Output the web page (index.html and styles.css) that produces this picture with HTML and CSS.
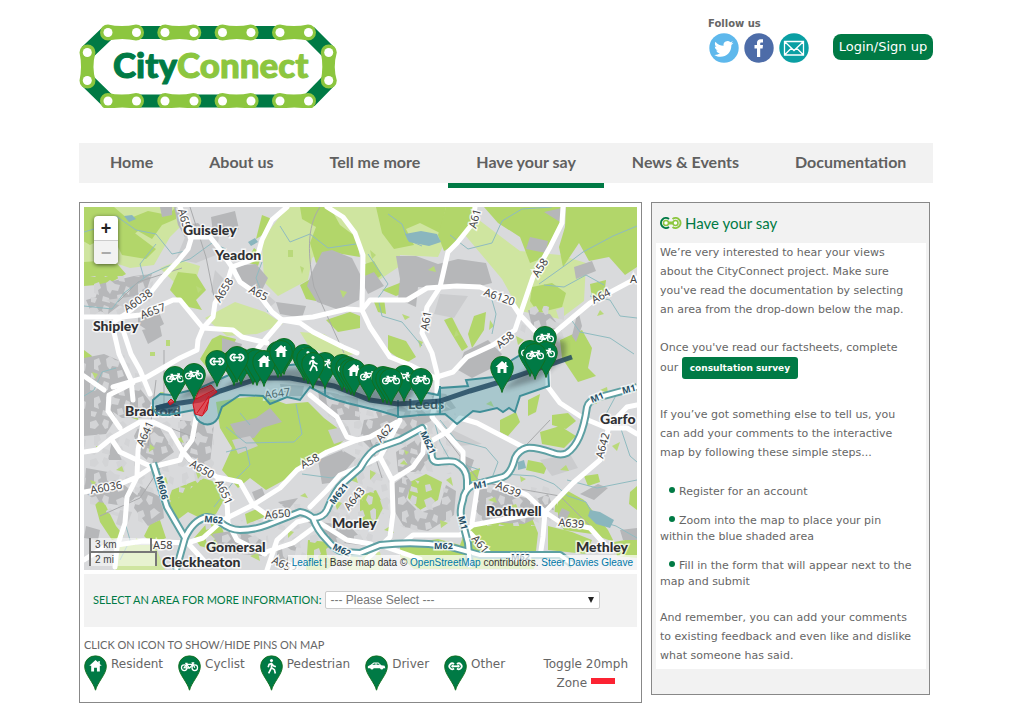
FILE: index.html
```html
<!DOCTYPE html>
<html lang="en">
<head>
    <meta charset="UTF-8">
    <meta name="viewport" content="width=device-width, initial-scale=1.0">
    <title>CityConnect - Have your say</title>
    <link rel="stylesheet" href="styles.css">
</head>
<body>
    <!-- shared icons -->
    <svg class="sprite" aria-hidden="true">
        <symbol id="pin" viewBox="0 0 24 37">
            <path d="M12 36.500C10 28 .7 20 .7 11.500a11.300 11 0 0 1 22.600 0C23.300 20 14 28 12 36.500z" fill="#007a45" stroke="#12701f"/>
        </symbol>
        <symbol id="house" viewBox="0 0 24 37">
            <use href="#pin"/>
            <path d="M12 5l-6.500 6h2v6h3v-4h3v4h3v-6h2l-2-2V6h-1.500v1.500z" fill="#fff"/>
        </symbol>
        <symbol id="bike" viewBox="0 0 24 37">
            <use href="#pin"/>
            <g fill="none" stroke="#fff" stroke-width="1.300">
                <circle cx="6.500" cy="13" r="2.900"/><circle cx="17.500" cy="13" r="2.900"/>
                <path d="M6.500 13L9 9.500h6.500L12 13.500zM9 9.500L12 13.500M7.500 8.500h2.500M17.500 13l-2.500-5h2"/>
            </g>
        </symbol>
        <symbol id="walker" viewBox="0 0 24 37">
            <use href="#pin"/>
            <circle cx="12" cy="5.500" r="1.600" fill="#fff"/>
            <path d="M12 8v5l-3 6M12 13l3 2 1 4M8.500 12.500L9.500 9.500 12 8.500l2 2.500 2.500 1" fill="none" stroke="#fff" stroke-width="1.700"/>
        </symbol>
        <symbol id="car" viewBox="0 0 24 37">
            <use href="#pin"/>
            <path d="M3 13.500v-2l3-1.500 3-2.500h5l3 2.800 3.500.7.700 2.500h-2a1.800 1.800 0 0 1-3.500 0H9a1.800 1.800 0 0 1-3.500 0z" fill="#fff"/>
            <path d="M7.500 10l2-1.500h1.500V10zM12 8.500h1.700l1.800 1.500H12z" fill="#007a45"/>
        </symbol>
        <symbol id="link" viewBox="0 0 24 37">
            <use href="#pin"/>
            <g fill="none" stroke="#fff" stroke-width="1.800">
                <path d="M10.500 9.200a3 3 0 1 0 0 4.600M13.500 9.200a3 3 0 1 1 0 4.600"/>
                <path d="M8.500 11.500h7"/>
            </g>
            <circle cx="9" cy="11.500" r="1.300" fill="#fff"/><circle cx="15" cy="11.500" r="1.300" fill="#fff"/>
        </symbol>
    </svg>

    <header class="header">
        <a href="#" class="logo" aria-label="CityConnect">
            <svg width="258" height="84" viewBox="79 24 258 84">
                <g stroke="#007a45" stroke-width="13">
                    <path d="M136 32.500h29M194 32.500h28M251 32.500h29M136 101h29M194 101h28M251 101h29"/>
                    <path d="M108 32.500L87 52.500M309 32.500L329 52.500M87 80.500L108 101M329 80.500L309 101" stroke-width="15"/>
                </g>
                <g fill="#8cc63f">
                    <g id="chainRow">
                        <path id="plate" d="M108 24.500a8 8 0 1 0 0 16q14.500-3 28 0a8 8 0 1 0 0-16q-14.500 3-28 0z"/>
                        <use href="#plate" x="57.300"/>
                        <use href="#plate" x="114.600"/>
                        <use href="#plate" x="172"/>
                    </g>
                    <use href="#chainRow" y="68.500"/>
                    <path id="sidePlate" d="M79.500 52.500a8 8 0 1 1 16 0q-4 14 0 28a8 8 0 1 1-16 0q3-14 0-28z"/>
                    <use href="#sidePlate" x="241.300"/>
                </g>
                <g fill="#fff">
                    <g id="rivets">
                        <circle cx="108" cy="32.500" r="4.500"/><circle cx="136.500" cy="32.500" r="4.500"/>
                        <circle cx="165" cy="32.500" r="4.500"/><circle cx="194" cy="32.500" r="4.500"/>
                        <circle cx="222.500" cy="32.500" r="4.500"/><circle cx="251" cy="32.500" r="4.500"/>
                        <circle cx="280" cy="32.500" r="4.500"/><circle cx="308.500" cy="32.500" r="4.500"/>
                    </g>
                    <use href="#rivets" y="68.500"/>
                    <circle cx="87.300" cy="52.500" r="4.500"/><circle cx="87.300" cy="80.500" r="4.500"/>
                    <circle cx="328.700" cy="52.500" r="4.500"/><circle cx="328.700" cy="80.500" r="4.500"/>
                </g>
                <text x="113" y="78" class="logo-text"><tspan class="dark">City</tspan><tspan class="light">Connect</tspan></text>
            </svg>
        </a>
        <div class="account">
            <div class="follow">
                <span class="follow-title">Follow us</span>
                <div class="social">
                    <a href="#" aria-label="Twitter">
                        <svg width="30" height="30" viewBox="0 0 30 30">
                            <circle cx="15" cy="15" r="14.700" fill="#5eb8ec"/>
                            <path d="M24.500 9.700c-.8.400-1.500.5-2.300.6.800-.5 1.400-1.200 1.700-2-.8.400-1.600.7-2.500.9a4 4 0 0 0-6.800 3.600c-3.300-.1-6.200-1.700-8.200-4.100-1 1.800-.5 4.100 1.200 5.300-.6 0-1.200-.2-1.800-.5 0 2 1.400 3.500 3.200 3.900-.6.200-1.200.2-1.800.1.500 1.600 2 2.700 3.700 2.700a8 8 0 0 1-5.700 1.700c7.700 4.600 17.300.2 17.200-9.900.8-.6 1.500-1.300 2.100-2.300z" fill="#fff"/>
                        </svg>
                    </a>
                    <a href="#" aria-label="Facebook">
                        <svg width="30" height="30" viewBox="0 0 30 30">
                            <circle cx="15" cy="15" r="14.700" fill="#4d6ca8"/>
                            <path d="M13 24v-8.500h-2.500V12H13V9.800C13 7.500 14.500 6.300 16.600 6.300h2.400v3.200h-1.500c-1 0-1.300.5-1.300 1.300V12H19l-.4 3.500h-2.400V24z" fill="#fff"/>
                        </svg>
                    </a>
                    <a href="#" aria-label="Email">
                        <svg width="30" height="30" viewBox="0 0 30 30">
                            <circle cx="15" cy="15" r="14.700" fill="#0a9fa3"/>
                            <path d="M5.500 8.500h19v13.500h-19zM5.500 8.500L15 17.500l9.500-9M5.500 22l7-7M24.500 22l-7-7" fill="none" stroke="#fff" stroke-width="1.300"/>
                        </svg>
                    </a>
                </div>
            </div>
            <a href="#" class="login">Login/Sign up</a>
        </div>
    </header>

    <nav class="nav">
        <a href="#">Home</a>
        <a href="#">About us</a>
        <a href="#">Tell me more</a>
        <a href="#" class="active">Have your say</a>
        <a href="#">News &amp; Events</a>
        <a href="#">Documentation</a>
    </nav>

    <main class="content">
        <section class="map-panel">
            <div class="map">
                <svg class="map-canvas" viewBox="84 207 553 363">
                    <defs>
                        <filter id="blur"><feGaussianBlur stdDeviation="2.500"/></filter>
                        <pattern id="blocks" width="44" height="38" patternUnits="userSpaceOnUse">
                            <path d="M2 4l6-2 3 5-4 4-5-1zM16 1l5 2-1 7-3 1-3-5zM28 6l7-3 4 4-3 4 1 5-6-1zM6 18l5-2 2 6-3 2 1 5-5-2zM18 17l4-3 5 4 5 1-2 6-6-1-2 4-3-4zM38 20l4 2-1 7-5-3zM3 31l6 1-2 5-4-1zM15 30l6 2 1 5-8-2zM29 29l5-1 2 6-6 2z" fill="#d3d4d6"/>
                        </pattern>
                    </defs>
                    <rect x="84" y="207" width="553" height="363" fill="#d9dadc"/>

                    <!-- farmland -->
                    <g fill="#cfe5a0">
                        <path d="M84 207h91l5 20-10 10-16 28-24 3-18-6-28 12z"/>
                        <path d="M262 240l25-33h188l-27 28-10 22-38-2v11l-24 16-16-30-30-8-18 14-4 22-30 16-14-14z"/>
                        <path d="M465 235l10-18 45 34 40 4 26 8-2 38-24 18-40-8-18-32z"/>
                        <path d="M160 268l20-8 20 6-4 14-22 2zM205 318l30-16 30 10 18 12-26 10-30 2zM300 332l24 2 30 20-14 4-30-10z"/>
                        <path d="M120 545h35l10 25h-50zM350 552h30l4 18h-38z"/>
                    </g>
                    <!-- woods and parks -->
                    <g fill="#b2d66a">
                        <path d="M84 207h30l14 12 20-8 20 4 8-8v12l-14 6-10 14-14-8-12 10-16-6-20 10-10-6zM84 262l30-2 12 14-18 10-24 2zM112 235l20-4 24 18-10 10-24-4z"/>
                        <path d="M300 207h30l10 18 16 12 4 20-24-4-20 10-6-20 6-16-14-8zM262 215l10 4-6 14-10 6zM376 207h70l-6 26-20-10-14 6 8 16-20 4-12-16z"/>
                        <path d="M446 207h28l-2 18-14 18-14 8-6-16zM484 207h79l-3 20-14 30-16 6-10-26-22-14zM566 207h71v60l-12 8-16-18-20 4-10-18-16 24-4-20 6-20z"/>
                        <path d="M532 287l20-4 14 10-4 14-24 6-8-12zM590 284l16-4-2 16-12 4zM560 340l22-10 10 18-4 20 8 8-18 6-16-24z"/>
                        <path d="M178 272l18 2 10 16-10 10 6 10-18-4-14-16zM246 262l8-14 8 6-4 12zM300 285l14-8 12 10-10 14-10-2zM326 320l24-8 10 4v12l-22 4zM220 335l16 4-6 16-22 14-8-10 12-20z"/>
                        <path d="M84 350l8 6-4 14-4-4zM122 408l8-8 10 4-2 16-12-4zM84 416l12-2 2 10-14 4zM94 500l10 2 12 24 8 10-12 4-12-18z"/>
                        <path d="M362 265l12-4 8 14-14 10zM382 290l20-8 14 6-20 8zM374 302l10-4 2 16-8-2zM388 335l18 6 10 16-10 6-18-12zM444 320l8-3 8 16 8 14-6 4-12-20zM474 316l12-4-2 18-12 18-4-14z"/>
                        <path d="M216 402l22-4 26-2 22 8 22-2 16 16 24 18-14 14-26 10-20 18-22 12-16-12-12 10-16-18 10-22-12-20z"/>
                        <path d="M172 490l30-12 14 4 8 18-8 14-16 4-12-6-16 12-6-18zM208 522l14 6 6 16-14 6-14-4-6-8zM150 524l10-4 6 18-14 6-8-8zM245 514l14-6 8 8-20 8z"/>
                        <path d="M500 420l16-8 4 10-12 14-8-4zM528 400l12-6-4 18-8 4zM552 415l16-2 8 8-10 8-14-4zM540 432l20-6 16 10-12 12-22-4zM528 460l20 4-4 10-18-4zM470 472l10-4-4 16-8-4z"/>
                        <path d="M410 482l16-8 16 8-4 18-18 10-12-12zM360 496l16-6 8 16-10 20-14-4zM400 545l38-6 22 6 6-16 30-10 34-6 8 20-4 36h-120l-14-12zM556 498l10-8 18 10 24 30 6 12-22-8-28-4-10-14zM584 476l14-2 2 8-12 4zM308 540l20 2 10 20-12 8h-20zM548 526l24 6 20 8-6 14-38-4zM614 542l23-4v20l-20-2zM630 492l7-6v24l-8-6z"/>
                    </g>
                    <!-- built up areas -->
                    <g fill="#b6b7b9">
                        <path d="M174 207l8 2 4 16 12-2 14 14-8 10-18-8-8-14zM211 217l24-6 4 18-10 8-16-4zM160 207l12 0 0 8-10 2zM236 266l20-2 12 14-6 12-18-6-6-8zM322 252l10-2 20 8 9 18-2 24-20 10-22-8-10-16 4-12zM276 302l30 4-4 12-22-4zM100 284l34-8 18-2-6 18-22 10-16 12-16-6zM138 312l20-2 6 14-14 8-12-8zM142 330l18-4 2 10-14 8zM86 300l14-4 10 12-18 6z"/>
                        <path d="M396 256l20 0 22 8 20-5 28 4 6 20-16 4-30 2-28-2-2 20-18-8 2-20zM360 278l14-6 10 14-16 8zM530 237l18 4-2 12-20-4zM574 267l18-6 4 10-20 8zM528 310l22 4 12 16-14 10-16-14zM464 352l24-12 14 14-10 14-20 10-14-8zM544 212l18-4-2 14zM578 310l4 16-6 16-4-6z"/>
                        <path d="M84 358l20-4 14 6 20 26 14 18-10 14-20 0-20-14-18 4zM84 398l24 4 8 16-10 16-22 2zM140 424l20 4 14 24-20 14-14-12-6-18zM180 420l34 4-4 40-14 6-16-16zM86 468l22 4 30 24-14 10-26-4-14-10zM112 440l10 20-14 0zM140 486l22 12 2 20-16 8-14-18zM118 384l14-6 6 12-14 6z"/>
                        <path d="M230 424l26-6 14-10 12 14-20 6-8 10-16 0zM222 338l20 6-4 12-16-4zM280 384l24 2-2 10-20 0zM318 390l40 8 2 22-24 0-16-14zM364 420l26-4 4 16-24 16-10-10zM318 460l24-10 14 8-20 24-14 2zM278 502l20-4-10 12zM300 516l20 6 30 4 18 20-34-4-18-14zM278 546l20-4-6 20-16 0zM212 534l26-4 28 12-4 14-40-4zM252 492l10-4 4 10-10 4zM86 526l14 4-2 10-14-2z"/>
                        <path d="M376 412l38-8 18 14-8 20-20-2-22-8zM396 452l26-16 8 20-10 16-22 0zM392 485l14-10 6 8-6 16 14 14 20-8 6-20 10 6-2 24-26 16-24-4-12-20zM476 488l18 2 40 10 14-6 6 16-30 14-40-2-10-14zM430 392l16 2 10 14-18 6zM460 454l14 6-4 12-12-4zM580 494l18-10 10 4-14 12zM562 508l8 4-6 12-8-4zM620 530l17-2v12h-14z"/>
                    </g>
                    <path d="M84 355h50l30 60h50v55l-70 55-60-20zM200 520h66l4 34h-60zM276 504h100v60H276zM318 390h114l24 24-4 60h-60l60 16v30l-30 20-60-40zM474 486h84v40h-84zM90 276h64l-6 40-60 2zM520 306h44v34h-44z" fill="url(#blocks)"/>
                    <!-- paler housing blocks -->
                    <g fill="#cbccce">
                        <path d="M190 225l30 6-4 24-20 8-20-4zM215 270l10 10-6 18-8-6zM106 300l30-4-10 12zM262 290l14 12-10 8zM440 294l28 2-14 22-20-4zM170 376l30-8-6 18zM232 440l18-4 8 10-20 8zM440 424l42 20-24 2-12-10zM540 460l30-6 8 14-26 8zM328 430l20-4 4 12-18 6zM120 510l12 2-6 16-10-4z"/>
                    </g>
                    <!-- small green patches -->
                    <path d="M150 352h5v4h-5zM166 340h4v6h-4zM92 372l6 2-3 5zM160 392h4v3h-4zM196 286l6 3-4 4zM300 266l4 2-2 6zM288 250h5v7h-5zM340 290l7 2-4 6zM370 250l6 5-4 4zM402 314l8 3-5 3zM418 340l5 2-3 6zM428 270l6-4 2 6zM456 330l3 5-5 2zM490 320l4 6-5 4zM516 336l8 4-6 5zM600 310l4 4-7 2zM96 446h6v3h-6zM116 470l6-4 2 6zM150 444l5 4-6 4zM176 440l5-3 3 6zM196 472l6 2-4 5zM90 480l6 2-3 4zM160 480l6-3 2 7zM300 496l5-3 3 5zM334 500l8 3-5 7zM350 480l6-4 2 7zM370 470l6 3-6 7zM400 464l4-4 4 5zM446 480l5-3 2 9zM440 520l8 3-7 5zM486 404l5-3 3 6zM520 476l6 3-5 3zM560 470l6-5 3 6zM612 446l8-4-3 9zM600 390l7-3 1 6zM384 530l6-4 4 7zM288 530l6 2-6 6zM250 556l8-3 2 8zM136 538l5 3-6 4zM488 500l7-3 2 6zM510 506l6-2 2 5zM404 450l5 2-3 3zM590 402l5-3 2 5z" fill="#b9d97a"/>

                    <!-- rivers, canals and lakes -->
                    <g fill="none" stroke="#8fbbc0" stroke-width="1" stroke-linejoin="round">
                        <path d="M84 232l20-6 12-10 20 14 20 4 16 20 18-4M84 306l28 3 12-16 24-18 18-8 24-8 22-16 14 6M156 244l-16 20 4 14M280 226l10 16 20-8 18 14 28-4M262 262l-6 16 8 20 4 14M388 214l14 10 6 16 14 6M422 346l-20-24-20-6-4-18 10-14-20-30M450 235l18 14 24-6 10-22 20-12 30-2M544 285l20 2 22-12 18 10M637 226l-24 10-30 16-16 12-28 20M570 318l10 14 30 6 24 16M590 296l20 4 10 16 17 2M492 300l4 14-4 20M84 396l10-6 8-18 14-4"/>
                        <path d="M226 427l20 16 48-1 8-8-6-30M226 452l20-5 4 18-16 16-20 26M250 425l-10-12M302 474l30 4 20-8M480 470l-30-10-10-18-6-22M440 420l16 20 30 8 12 14-6 16M504 474l30 2 20 8 14 12 18 6 10 18 20 6 21 12M637 480l-40 8-30-8M620 388l-14 26 14 12 10 30 7 6M120 560l10-20-4-14M210 560l16 10"/>
                    </g>
                    <path d="M405 234l16-3 16 3 4 8-12 4-20-4zM248 242l7-4 3 4-7 4zM124 216l8-1 4 4-7 3zM518 462l6-2 2 8-8 2zM590 510l10 2 14 8-4 8-14-4-8-8z" fill="#8ab6be"/>
                    <path d="M320 207c-14 20-12 50-6 80l30 66M190 207l16 50 8 40M118 302l20-20 44-14M156 380l-8 66M160 424l36 14M440 430l40 52 80 14 40 40M100 516l40-18 20-30M164 350v60M370 440l12 38M550 420l-40 42" fill="none" stroke="#a9aaac" stroke-width="1"/>

                    <!-- A roads -->
                    <g class="roads-a">
                        <path d="M180 207l8 20 3 12-3 10-10 12-15 16-16 20-20 16-12 8"/>
                        <path d="M190 237l20 0 8 10 14 20 8 15 20 14 12 16 10 8 18 3 13 9 30 15 14 6"/>
                        <path d="M232 267l25-9 5-18 10-20 15-13M327 207l16 10 12 16 8 22-1 55 8 17 20 30 20 8 27 14"/>
                        <path d="M232 267l-5 16-12 20-2 14-10 11-5 12-1 10-17 8-33 19-34 10"/>
                        <path d="M84 317h38l18-2 33-15h7l23 28 30 2 9 7 25 6M282 320l-24 28"/>
                        <path d="M282 320l31-3 34-8 15 1 8-10h37l20-12 30-2 23 1 30 13 10 15 17 18 11 25v29"/>
                        <path d="M475 207l-2 16-16 20-9 9-8 35-13 20-5 26 10 20 5 20v22"/>
                        <path d="M563 207l-1 16-12 24-17 30-13 38-5 15-22 15-26 12-14 15-16 5"/>
                        <path d="M553 334l37-31 47-25"/>
                        <path d="M113 328l6 26 12 26 2 20M123 330l8 24 9 16 10 24"/>
                        <path d="M84 452l13-2 15-12 28-16h13l17 8 13 22-3 8-28 7-32-15-8-12M133 383l-24 12-1 16 12 17"/>
                        <path d="M143 423l-5 27-1 27-10 20-2 26-8 24-2 20M84 492l29-5 24-10 15-10"/>
                        <path d="M183 452l7 8 27 17 23 5 13 23 14 10M197 413l-5 27-9 12M218 480l9 20 1 23 9 17 28 14"/>
                        <path d="M117 545l26-4 44 2 16-5 20-18 30-15 27-17 17-18 30-18 30-12 13-3 27-15"/>
                        <path d="M310 395l27 22 10 20 10 3M310 507l17-17 13-15 17-7 23-11M313 518l-16 4-20 18-10 30M263 553l30-10 27-20 27 17 24 4"/>
                        <path d="M84 560l20-13M185 540l20 22M400 420l-20 37 12 23 1 33-3 24-23 22M392 480l21-13 10-14 2-26M437 395l-5 22 11 13 20 22v16M428 443l22-13 10-12 17 5 46 24"/>
                        <path d="M403 543l10-8h47l13-10 27-5 45-8M477 490l-5 33M493 480l34 15 18 17 15 10 30 6 17 19M608 430l-8 30-27 23-28 29-2 25-3 20M548 387l12 16 23 15 24 10 20-21 10-2M607 428l20 0 10 6M470 533l23 24M84 376l20 14M380 545l40 14"/>
                    </g>
                    <!-- motorways -->
                    <g fill="none" stroke-linejoin="round">
                        <g stroke="#5ea0a3" stroke-width="8">
                            <path d="M153 463l14 44 18 31-9 32"/>
                            <path d="M185 538q8-18 22-21 8 1 13 5 10 8 20 8 14 0 27-5l33-13q7 1 13 6 4 12 14 22 8 10 16 12l17 1 20-8q34-4 67 1l33 9h80l13 10"/>
                            <path d="M313 518q10 0 14-8 8-20 16-27l17-15q10-18 20-21l20-7 22-12 10 22q-2 12 6 12 16-2 19 1 10 6 10 17v10"/>
                            <path d="M637 387l-37 10q-12 4-13 10-5 36-20 46-6 3-14 0-18-6-26-5-8 2-12 10-4 16-12 19l-30 8q-9 5-10 15-4 12-1 20l6 23 2 24"/>
                        </g>
                        <g stroke="#fff" stroke-width="4">
                            <path d="M153 463l14 44 18 31-9 32"/>
                            <path d="M185 538q8-18 22-21 8 1 13 5 10 8 20 8 14 0 27-5l33-13q7 1 13 6 4 12 14 22 8 10 16 12l17 1 20-8q34-4 67 1l33 9h80l13 10"/>
                            <path d="M313 518q10 0 14-8 8-20 16-27l17-15q10-18 20-21l20-7 22-12 10 22q-2 12 6 12 16-2 19 1 10 6 10 17v10"/>
                            <path d="M637 387l-37 10q-12 4-13 10-5 36-20 46-6 3-14 0-18-6-26-5-8 2-12 10-4 16-12 19l-30 8q-9 5-10 15-4 12-1 20l6 23 2 24"/>
                        </g>
                    </g>

                    <!-- road numbers -->
                    <g class="road-label">
                        <text transform="translate(178 210) rotate(75)">A65</text>
                        <text transform="translate(127 313) rotate(-35)">A6038</text>
                        <text transform="translate(142 319) rotate(-20)">A657</text>
                        <text transform="translate(220 303) rotate(-58)">A658</text>
                        <text transform="translate(248 292) rotate(28)">A65</text>
                        <text transform="translate(476 229) rotate(-75)">A61</text>
                        <text transform="translate(483 295) rotate(20)">A6120</text>
                        <text transform="translate(428 331) rotate(-80)">A61</text>
                        <text transform="translate(500 349) rotate(-40)">A58</text>
                        <text transform="translate(538 278) rotate(-57)">A58</text>
                        <text transform="translate(594 304) rotate(-28)">A64</text>
                        <text x="630" y="283">A</text>
                        <text transform="translate(143 447) rotate(-65)">A641</text>
                        <text transform="translate(91 494) rotate(-10)">A6036</text>
                        <text transform="translate(189 466) rotate(30)">A650</text>
                        <text transform="translate(215 482) rotate(65)">A651</text>
                        <text transform="translate(303 469) rotate(-28)">A58</text>
                        <text transform="translate(265 519) rotate(-5)">A650</text>
                        <text transform="translate(349 511) rotate(-50)">A643</text>
                        <text transform="translate(381 443) rotate(-50)">A62</text>
                        <text x="153" y="549">A58</text>
                        <text transform="translate(271 563) rotate(25)">A652</text>
                        <text transform="translate(495 488) rotate(22)">A639</text>
                        <text transform="translate(558 526) rotate(5)">A639</text>
                        <text transform="translate(603 459) rotate(-75)">A642</text>
                        <text transform="translate(471 539) rotate(50)">A61</text>
                        <text transform="translate(265 399) rotate(-8)">A647</text>
                    </g>
                    <g class="road-label motorway">
                        <text transform="translate(156 477) rotate(75)">M606</text>
                        <text transform="translate(204 522) rotate(5)">M62</text>
                        <text transform="translate(334 505) rotate(-52)">M621</text>
                        <text transform="translate(332 549) rotate(25)">M62</text>
                        <text x="434" y="549">M62</text>
                        <text x="511" y="560">M62</text>
                        <text transform="translate(420 433) rotate(65)">M621</text>
                        <text transform="translate(474 489) rotate(-10)">M1</text>
                        <text transform="translate(458 517) rotate(75)">M1</text>
                        <text transform="translate(592 403) rotate(-22)">M1</text>
                        <text transform="translate(623 394) rotate(-15)">M1</text>
                    </g>
                    <g class="place">
                        <text x="183" y="235">Guiseley</text>
                        <text x="215" y="260">Yeadon</text>
                        <text x="93" y="331">Shipley</text>
                        <text x="125" y="416">Bradford</text>
                        <text x="408" y="409">Leeds</text>
                        <text x="600" y="424">Garfo</text>
                        <text x="486" y="516">Rothwell</text>
                        <text x="576" y="552">Methley</text>
                        <text x="332" y="528">Morley</text>
                        <text x="206" y="552">Gomersal</text>
                        <text x="162" y="567">Cleckheaton</text>
                    </g>

                    <!-- consultation area and route -->
                    <path d="M153 400L160 394 171 395 200 388 240 370 300 364 354 370 414 390 438 395 440 388 468 386 466 380 494 377 512 360 522 354 547 350 549 386 520 396 515 412 509 408 503 412 497 408 480 412 473 411 457 424 445 414 420 415 400 417 380 411 347 403 330 398 310 387 300 400 287 397 270 404 263 396 240 395 222 407 218 418Q213 426 204 424 195 421 194 410L168 415Q154 416 153 408z" fill="#5fa9b6" fill-opacity=".4" stroke="#408f98" stroke-width="2"/>
                    <path d="M398 400v18M440 386v28M325 370v26" fill="none" stroke="#408f98" stroke-width="2"/>
                    <path d="M156 408l18-4 26-4 20-9 40-13 30 0 44 8 36 14 28 4 42-3 30-10 30-9 72-25" fill="none" stroke="#234a62" stroke-width="5" stroke-opacity=".85"/>
                    <path d="M155 406l14-4 10 4-6 7-15-1z" fill="#234a62" opacity=".75"/>
                    <g fill="#f0222e" fill-opacity=".72" stroke="#d3121d" stroke-width="1">
                        <path d="M193 404l6-14 12-5 6 7-8 6-2 12-5 6-7-2zM196 399l18-9M197 413l12-17M203 414l5-12M168 402l3-3 3 3-4 3z"/>
                    </g>

                    <!-- pin shadows -->
                    <g fill="#20262b" opacity=".35" filter="url(#blur)">
                        <path d="M176 400l30-24 16 0-10 18 40-24 50-2 20 8 60 12 34 0-10 20-40-6-30-12-60-10-50 8z"/>
                        <path d="M502 390l24-20 8-4 18-28 14 4 0 14-28 24-14 4z"/>
                    </g>
                    <!-- pins -->
                    <g>
                        <use href="#bike" x="163" y="366" width="24" height="37"/>
                        <use href="#bike" x="182" y="363" width="24" height="37"/>
                        <use href="#pin" x="222" y="349" width="24" height="37"/>
                        <use href="#pin" x="229" y="348" width="24" height="37"/>
                        <use href="#link" x="205" y="350" width="24" height="37"/>
                        <use href="#pin" x="241" y="348" width="24" height="37"/>
                        <use href="#pin" x="245" y="349" width="24" height="37"/>
                        <use href="#link" x="225" y="346" width="24" height="37"/>
                        <use href="#pin" x="266" y="341" width="24" height="37"/>
                        <use href="#pin" x="272" y="338" width="24" height="37"/>
                        <use href="#house" x="252" y="350" width="24" height="37"/>
                        <use href="#house" x="269" y="340" width="24" height="37"/>
                        <use href="#walker" x="292" y="344" width="24" height="37"/>
                        <use href="#walker" x="296" y="347" width="24" height="37"/>
                        <use href="#bike" x="313" y="352" width="24" height="37"/>
                        <use href="#walker" x="301" y="352" width="24" height="37"/>
                        <use href="#pin" x="330" y="354" width="24" height="37"/>
                        <use href="#bike" x="335" y="356" width="24" height="37"/>
                        <use href="#pin" x="339" y="358" width="24" height="37"/>
                        <use href="#house" x="342" y="359" width="24" height="37"/>
                        <use href="#bike" x="357" y="364" width="24" height="37"/>
                        <use href="#pin" x="371" y="366" width="24" height="37"/>
                        <use href="#pin" x="375" y="367" width="24" height="37"/>
                        <use href="#bike" x="392" y="365" width="24" height="37"/>
                        <use href="#bike" x="379" y="368" width="24" height="37"/>
                        <use href="#bike" x="409" y="368" width="24" height="37"/>
                        <use href="#house" x="490" y="356" width="24" height="37"/>
                        <use href="#bike" x="533" y="326" width="24" height="37"/>
                        <use href="#bike" x="518" y="340" width="24" height="37"/>
                        <use href="#bike" x="534" y="341" width="24" height="37"/>
                        <use href="#bike" x="523" y="343" width="24" height="37"/>
                    </g>
                </svg>
                <div class="zoom">
                    <button type="button" aria-label="Zoom in">+</button>
                    <button type="button" aria-label="Zoom out" disabled>&minus;</button>
                </div>
                <div class="scale">
                    <div class="scale-km">3 km</div>
                    <div class="scale-mi">2 mi</div>
                </div>
                <div class="attribution"><a href="#">Leaflet</a> | Base map data © <a href="#">OpenStreetMap</a> contributors. <a href="#">Steer Davies Gleave</a></div>
            </div>

            <form class="area-form">
                <label for="area">SELECT AN AREA FOR MORE INFORMATION:</label>
                <div class="select-wrap">
                    <select id="area" name="area">
                        <option>--- Please Select ---</option>
                    </select>
                </div>
            </form>

            <h2 class="legend-title">CLICK ON ICON TO SHOW/HIDE PINS ON MAP</h2>
            <div class="legend">
                <button type="button"><svg width="23" height="36"><use href="#house"/></svg>Resident</button>
                <button type="button"><svg width="23" height="36"><use href="#bike"/></svg>Cyclist</button>
                <button type="button"><svg width="23" height="36"><use href="#walker"/></svg>Pedestrian</button>
                <button type="button"><svg width="23" height="36"><use href="#car"/></svg>Driver</button>
                <button type="button"><svg width="23" height="36"><use href="#link"/></svg>Other</button>
                <button type="button" class="toggle"><span>Toggle 20mph</span><span>Zone <i class="zone-key"></i></span></button>
            </div>
        </section>

        <aside class="say">
            <h1>
                <svg width="22" height="14" viewBox="0 0 22 14">
                    <path d="M15 7H7" stroke="#8cc63f" stroke-width="3"/>
                    <circle cx="6" cy="7" r="2.500" fill="#fff" stroke="#8cc63f" stroke-width="1.500"/>
                    <circle cx="15.500" cy="7" r="2.500" fill="#fff" stroke="#8cc63f" stroke-width="1.500"/>
                    <path d="M9 3A5 5 0 1 0 9 11" fill="none" stroke="#007a45" stroke-width="2"/>
                    <path d="M12.500 3a5 5 0 1 1 0 8" fill="none" stroke="#8cc63f" stroke-width="2"/>
                </svg>
                Have your say
            </h1>
            <div class="say-body">
                <p>We’re very interested to hear your views about the CityConnect project. Make sure you've read the documentation by selecting an area from the drop-down below the map.</p>
                <p class="survey-line">Once you've read our factsheets, complete our <a href="#" class="survey">consultation survey</a></p>
                <p>If you’ve got something else to tell us, you can add your comments to the interactive map by following these simple steps...</p>
                <ul>
                    <li>Register for an account</li>
                    <li>Zoom into the map to place your pin within the blue shaded area</li>
                    <li>Fill in the form that will appear next to the map and submit</li>
                </ul>
                <p>And remember, you can add your comments to existing feedback and even like and dislike what someone has said.</p>
            </div>
        </aside>
    </main>
</body>
</html>
```

FILE: styles.css
```css
* {
    box-sizing: border-box;
}
body {
    margin: 0;
    padding: 0 91px 0 79px;
    font-family: "DejaVu Sans", Verdana, sans-serif;
    font-size: 12px;
    color: #666;
    background: #fff;
}
button {
    font: inherit;
    color: inherit;
    border: 0;
    padding: 0;
    background: none;
    cursor: pointer;
}
svg {
    display: block;
}
.sprite {
    position: absolute;
    width: 0;
    height: 0;
}

/* header */
.header {
    display: flex;
    justify-content: space-between;
    align-items: flex-start;
    height: 143px;
    padding-top: 17px;
}
.logo {
    padding-top: 7px;
}
.logo-text {
    font-family: Lato, sans-serif;
    font-size: 35px;
    font-weight: 900;
    stroke-width: 1;
    stroke-linejoin: round;
}
.dark {
    fill: #007a45;
    stroke: #007a45;
}
.light {
    fill: #8cc63f;
    stroke: #8cc63f;
}
.account {
    display: flex;
    align-items: flex-start;
    gap: 24px;
}
.follow-title {
    display: block;
    font-size: 10px;
    font-weight: bold;
    line-height: 14px;
    margin-bottom: 2px;
}
.social {
    display: flex;
    gap: 5px;
    padding-left: 1px;
}
.login {
    margin-top: 17px;
    width: 100px;
    line-height: 26px;
    border-radius: 8px;
    background: #007a45;
    color: #fff;
    font-size: 13px;
    text-align: center;
    text-decoration: none;
    white-space: nowrap;
}

/* navigation */
.nav {
    display: flex;
    justify-content: space-between;
    height: 40px;
    padding-left: 3px;
    background: #f2f2f2;
}
.nav a {
    height: 45px;
    padding: 0 28px;
    line-height: 38px;
    font-family: Lato, sans-serif;
    font-size: 16px;
    font-weight: bold;
    color: #606060;
    text-decoration: none;
    white-space: nowrap;
}
.nav .active {
    border-bottom: 5px solid #007a45;
}

.content {
    display: grid;
    grid-template-columns: 563fr 279fr;
    gap: 9px;
    align-items: start;
    padding: 19px 3px 0 0;
}

/* map */
.map-panel {
    border: 1px solid #888;
    padding: 4px 4px 9px;
}
.map {
    position: relative;
    overflow: hidden;
    font-family: "Liberation Sans", Arial, sans-serif;
}
.map-canvas {
    width: 100%;
}
.roads-a {
    fill: none;
    stroke: #fff;
    stroke-width: 5;
    stroke-linejoin: round;
    stroke-linecap: round;
}
.road-label {
    font-family: "Noto Sans", sans-serif;
    font-size: 11px;
    fill: #444;
    stroke: #fff;
    stroke-width: 3;
    stroke-opacity: .8;
    paint-order: stroke;
}
.motorway {
    fill: #274f66;
    font-weight: bold;
    font-size: 9px;
}
.place {
    font-family: Lato, sans-serif;
    font-size: 14px;
    font-weight: 900;
    fill: #2f3033;
    stroke: #fff;
    stroke-width: 3;
    stroke-opacity: .75;
    paint-order: stroke;
}
.zoom {
    position: absolute;
    left: 10px;
    top: 9px;
    width: 24px;
    border-radius: 4px;
    overflow: hidden;
    background: #fff;
    box-shadow: 0 1px 4px rgba(0, 0, 0, .6);
}
.zoom button {
    display: block;
    width: 24px;
    height: 24px;
    font-size: 18px;
    font-weight: bold;
    line-height: 24px;
    color: #222;
}
.zoom button:disabled {
    border-top: 1px solid #ccc;
    background: #f2f2f2;
    color: #aaa;
}
.scale {
    position: absolute;
    left: 5px;
    bottom: 4px;
    font-size: 10px;
    color: #444;
}
.scale div {
    height: 15px;
    padding-left: 4px;
    line-height: 14px;
    border: 2px solid #777;
    background: rgba(255, 255, 255, .5);
}
.scale .scale-km {
    width: 63px;
    border-top: 0;
}
.scale .scale-mi {
    width: 68px;
    margin-top: -2px;
    border-bottom: 0;
}
.attribution {
    position: absolute;
    right: 0;
    bottom: 0;
    padding: 0 4px;
    line-height: 15px;
    font-size: 10px;
    color: #333;
    white-space: nowrap;
    background: rgba(255, 255, 255, .7);
}
.attribution a {
    color: #0078a8;
    text-decoration: none;
}

.area-form {
    display: flex;
    align-items: center;
    gap: 4px;
    height: 53px;
    margin-top: 4px;
    padding: 0 37px 2px 9px;
    background: #f2f2f2;
}
.area-form label,
.legend-title {
    font-family: Lato, sans-serif;
    font-size: 11px;
    font-weight: normal;
    white-space: nowrap;
}
.area-form label {
    color: #007a45;
}
.select-wrap {
    position: relative;
    flex: 1;
}
.select-wrap::after {
    content: "";
    position: absolute;
    right: 6px;
    top: 6px;
    border: 3px solid transparent;
    border-top: 6px solid #222;
    border-bottom: 0;
    pointer-events: none;
}
.area-form select {
    display: block;
    width: 100%;
    height: 18px;
    padding: 0 4px;
    border: 1px solid #ccc;
    border-radius: 2px;
    background: #fff;
    color: #777;
    font-family: "Liberation Sans", Arial, sans-serif;
    font-size: 12px;
    appearance: none;
}
.legend-title {
    margin: 10px 0 2px;
    line-height: 16px;
}
.legend {
    display: flex;
    gap: 15px;
}
.legend button {
    display: flex;
    align-items: flex-start;
    gap: 4px;
    line-height: 18px;
    white-space: nowrap;
}
.legend .toggle {
    flex-direction: column;
    align-items: center;
    gap: 0;
    line-height: 19px;
    margin: 0 9px 0 auto;
}
.zone-key {
    display: inline-block;
    width: 24px;
    height: 6px;
    margin-bottom: 3px;
    background: #fc2332;
}

/* sidebar */
.say {
    border: 1px solid #888;
    padding: 0 3px 25px 4px;
    background: #f2f2f2;
}
.say h1 {
    display: flex;
    align-items: center;
    gap: 3px;
    height: 40px;
    margin: 0;
    padding-left: 4px;
    font-family: Lato, sans-serif;
    font-size: 15px;
    font-weight: normal;
    color: #007a45;
}
.say-body {
    padding: 0 14px 4px 4px;
    line-height: 19px;
    font-size: 11px;
    background: #fff;
}
.say-body p {
    margin: 0 0 19px;
}
.say-body .survey-line {
    margin-bottom: 26px;
}
.survey {
    display: inline-block;
    padding: 0 8px;
    line-height: 22px;
    border-radius: 3px;
    background: #007a45;
    color: #fff;
    font-size: 9px;
    font-weight: bold;
    text-decoration: none;
}
.say-body ul {
    margin: 0 0 18px;
    padding: 3px 0 0;
    list-style: none;
    line-height: 16px;
}
.say-body li {
    margin-bottom: 13px;
}
.say-body li::before {
    content: "";
    display: inline-block;
    width: 6px;
    height: 6px;
    margin: 0 4px 2px 9px;
    border-radius: 50%;
    background: #007a45;
}
.say-body p:last-child {
    margin-bottom: 0;
}
```
